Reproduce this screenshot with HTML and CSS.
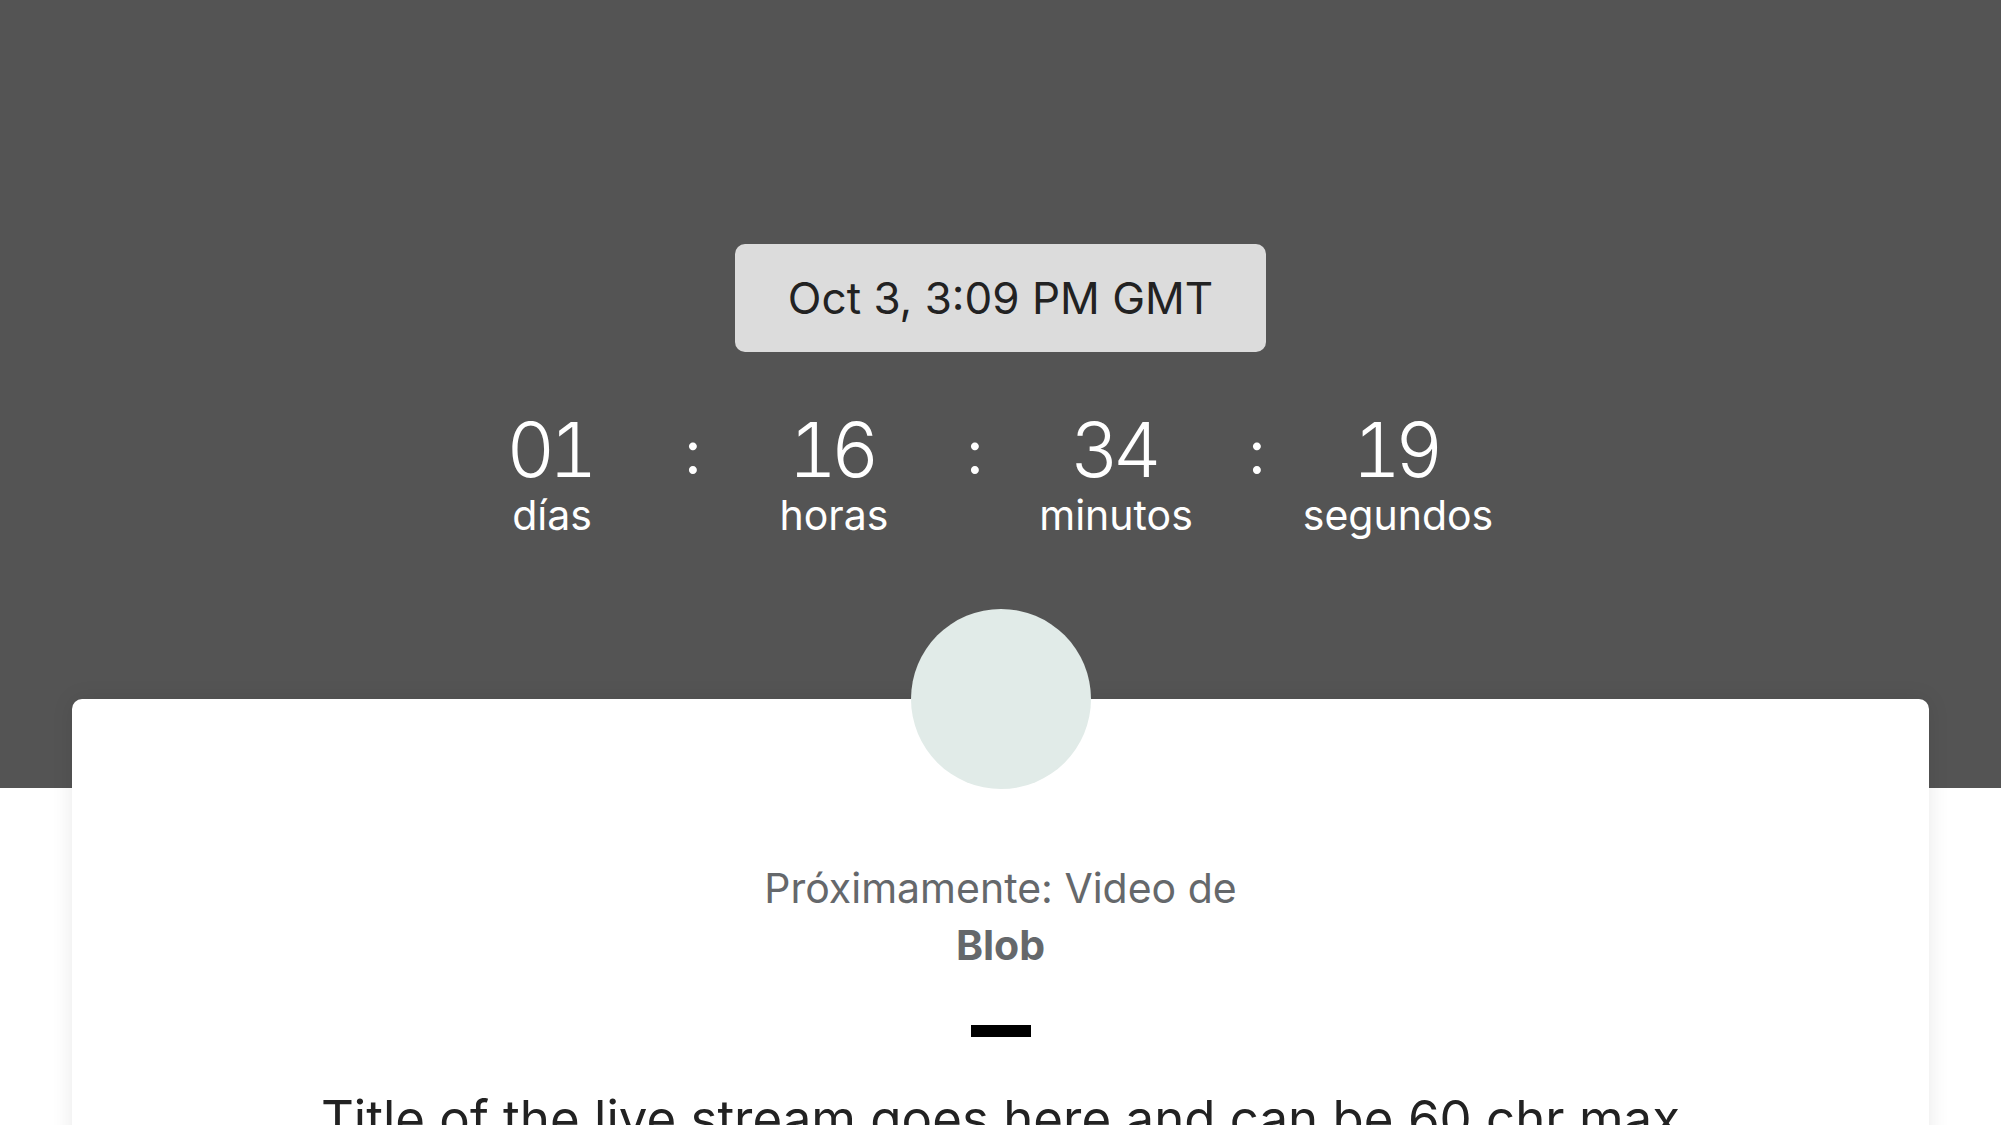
FILE: index.html
```html
<!DOCTYPE html>
<html lang="es">
<head>
<meta charset="utf-8">
<title>Próximamente</title>
<link rel="stylesheet" href="styles.css">
</head>
<body>
<header class="hero">
  <div class="date-pill">Oct 3, 3:09 PM GMT</div>
  <div class="countdown">
    <div class="group">
      <div class="unit"><div class="num">01</div><div class="label">días</div></div>
      <div class="colon">:</div>
    </div>
    <div class="group">
      <div class="unit"><div class="num">16</div><div class="label">horas</div></div>
      <div class="colon">:</div>
    </div>
    <div class="group">
      <div class="unit"><div class="num">34</div><div class="label">minutos</div></div>
      <div class="colon">:</div>
    </div>
    <div class="group">
      <div class="unit"><div class="num">19</div><div class="label">segundos</div></div>
      <div class="colon colon-hidden">:</div>
    </div>
  </div>
</header>
<main class="card">
  <div class="avatar"></div>
  <p class="soon">Próximamente: Video de</p>
  <p class="channel">Blob</p>
  <div class="bar"></div>
  <h1 class="title">Title of the live stream goes here and can be 60 chr max</h1>
</main>
</body>
</html>
```

FILE: styles.css
```css
html, body {
  margin: 0;
  padding: 0;
  background: #ffffff;
  font-family: Inter, Roboto, "Liberation Sans", Arial, sans-serif;
  overflow: hidden;
}

.hero {
  box-sizing: border-box;
  height: 788px;
  background: #545454;
  padding-top: 244px;
  display: flex;
  flex-direction: column;
  align-items: center;
}

.date-pill {
  box-sizing: border-box;
  height: 108px;
  width: 531px;
  background: #dcdcdc;
  border-radius: 10px;
  color: #222222;
  font-size: 44px;
  line-height: 108px;
  text-align: center;
}

.countdown {
  display: flex;
  margin-top: 61px;
  color: #ffffff;
}

.group {
  display: flex;
  width: 282px;
}

.unit {
  width: 231px;
  display: flex;
  flex-direction: column;
  align-items: center;
}

.num {
  font-size: 75px;
  font-weight: 300;
  line-height: 74px;
  height: 74px;
  font-variant-numeric: tabular-nums;
  letter-spacing: -6px;
  margin-right: 6px;
}

.label {
  font-size: 41px;
  font-weight: 400;
  line-height: 44px;
  margin-top: 6px;
}

.colon {
  width: 51px;
  text-align: center;
  font-size: 60px;
  font-weight: 400;
  line-height: 74px;
  height: 74px;
  padding-top: 2px;
}

.colon-hidden {
  visibility: hidden;
}

.card {
  position: relative;
  margin: -89px 72px 0;
  min-height: 600px;
  background: #ffffff;
  border-radius: 10px;
  box-shadow: 0 0 22px rgba(0, 0, 0, 0.09);
  display: flex;
  flex-direction: column;
  align-items: center;
}

.avatar {
  width: 180px;
  height: 180px;
  border-radius: 50%;
  background: #e1ebe8;
  margin-top: -90px;
}

.soon {
  margin: 70px 0 0;
  font-size: 41px;
  line-height: 58px;
  color: #65686b;
}

.channel {
  margin: -1px 0 0;
  font-size: 41px;
  font-weight: 700;
  line-height: 58px;
  color: #65686b;
}

.bar {
  width: 60px;
  height: 12px;
  background: #000000;
  margin-top: 51px;
}

.title {
  margin: 52px 0 0;
  font-size: 51px;
  font-weight: 400;
  line-height: 60px;
  color: #222222;
  text-align: center;
}
```
